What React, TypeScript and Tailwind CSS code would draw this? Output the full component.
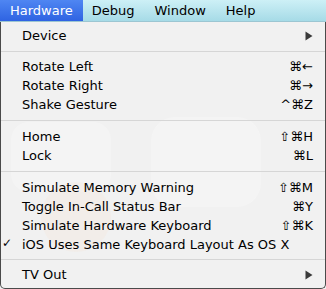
import React from "react";

type Item =
  | { kind: "sep"; h: number }
  | { kind: "item"; label: string; sc?: string; sub?: boolean; check?: boolean };

const items: Item[] = [
  { kind: "item", label: "Device", sub: true },
  { kind: "sep", h: 12 },
  { kind: "item", label: "Rotate Left", sc: "⌘←" },
  { kind: "item", label: "Rotate Right", sc: "⌘→" },
  { kind: "item", label: "Shake Gesture", sc: "^⌘Z" },
  { kind: "sep", h: 13 },
  { kind: "item", label: "Home", sc: "⇧⌘H" },
  { kind: "item", label: "Lock", sc: "⌘L" },
  { kind: "sep", h: 13 },
  { kind: "item", label: "Simulate Memory Warning", sc: "⇧⌘M" },
  { kind: "item", label: "Toggle In-Call Status Bar", sc: "⌘Y" },
  { kind: "item", label: "Simulate Hardware Keyboard", sc: "⇧⌘K" },
  { kind: "item", label: "iOS Uses Same Keyboard Layout As OS X", check: true },
  { kind: "sep", h: 11 },
  { kind: "item", label: "TV Out", sub: true },
];

function Arrow() {
  return (
    <svg width="8" height="10" viewBox="0 0 8 10" className="block">
      <path d="M0.5 0.5 L7.5 5 L0.5 9.5 Z" fill="#3a3a3a" />
    </svg>
  );
}

export default function App() {
  return (
    <div
      className="relative w-[326px] h-[289px] overflow-hidden bg-[#f1f1f1] text-black"
      style={{ fontFamily: '"DejaVu Sans", Verdana, sans-serif' }}
    >
      {/* menubar */}
      <div className="relative z-10 flex h-[22px] items-center text-[13px] bg-gradient-to-b from-[#cdf0f6] to-[#a6dbe7] border-b border-[#9cc6d2]">
        <div className="flex h-full items-center px-[10px] text-white bg-gradient-to-b from-[#4f86f2] to-[#2f63e2]">
          Hardware
        </div>
        <div className="pl-[9px] pr-[10px]">Debug</div>
        <div className="px-[10px]">Window</div>
        <div className="px-[10px]">Help</div>
      </div>

      {/* menu body */}
      <div className="absolute left-0 right-0 top-[22px] bottom-0 rounded-b-[5px] border-x border-b border-[#4a4a4a] bg-[#f1f1f1]">
        {/* faint translucent background */}
        <div className="pointer-events-none absolute inset-0 overflow-hidden">
          <div className="absolute left-[10px] top-[100px] h-[70px] w-[100px] rounded-[18px] bg-white/25" />
          <div className="absolute left-[150px] top-[95px] h-[90px] w-[110px] rounded-[24px] bg-white/25" />
          <div className="absolute left-[40px] top-[160px] h-[70px] w-[70px] rounded-full bg-[#f6e6d8]/30" />
        </div>

        <div className="relative flex flex-col pt-[4px] text-[13px]">
          {items.map((it, i) =>
            it.kind === "sep" ? (
              <div key={i} className="flex items-center" style={{ height: it.h }}>
                <div className="h-px w-full bg-[#d6d6d6]" />
              </div>
            ) : (
              <div key={i} className="flex h-[19px] items-center pl-[21px] pr-[12px]">
                <div className="relative flex-1 leading-none">
                  {it.check && (
                    <span className="absolute left-[-20px] top-[-1px] text-[12px]">✓</span>
                  )}
                  {it.label}
                </div>
                {it.sc && <div className="leading-none">{it.sc}</div>}
                {it.sub && <Arrow />}
              </div>
            )
          )}
        </div>
      </div>
    </div>
  );
}
